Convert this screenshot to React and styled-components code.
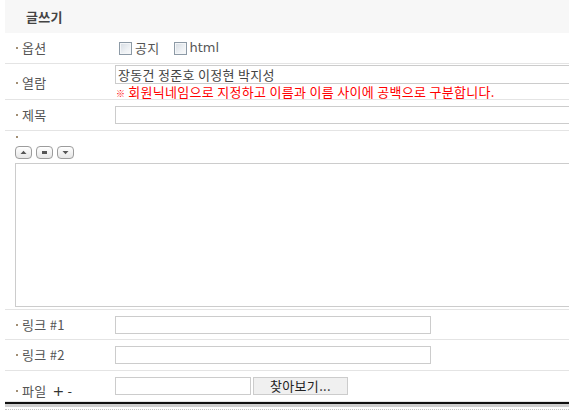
import React from 'react';
import styled, { createGlobalStyle } from 'styled-components';

const GlobalStyle = createGlobalStyle`
  html, body {
    margin: 0;
    padding: 0;
    background: #fff;
    overflow: hidden;
  }
  body {
    font-family: "Noto Sans CJK KR", "Noto Sans", sans-serif;
    font-size: 13px;
    letter-spacing: 0.3px;
    color: #555;
  }
`;

const Board = styled.div`
  width: 640px;
  margin-left: 5px;
`;

const Header = styled.div`
  height: 33px;
  background: #f7f7f7;
  display: flex;
  align-items: center;
  padding-left: 21px;
  font-weight: bold;
  color: #444;
  line-height: 1;
`;

const Row = styled.div`
  display: grid;
  grid-template-columns: 110px 1fr;
  align-items: center;
  height: ${(p) => p.$height || 30}px;
  border-bottom: 1px solid #e4e4e4;
`;

const Label = styled.div`
  display: flex;
  align-items: center;
  gap: 4px;
  padding-left: 11px;
  padding-top: ${(p) => p.$offset || 0}px;
  color: #555;
  line-height: 14px;
  white-space: nowrap;
`;

const Bullet = styled.span`
  width: 2px;
  height: 2px;
  background: #a38f74;
  flex: none;
`;

const Field = styled.div`
  display: flex;
  flex-direction: column;
  gap: 1px;
  padding: ${(p) => p.$pad || '0'};
`;

const Inline = styled.div`
  display: flex;
  align-items: center;
  gap: ${(p) => p.$gap ?? 3}px;
`;

const Check = styled.span`
  width: 11px;
  height: 11px;
  border: 1px solid #8d9aa6;
  background: linear-gradient(135deg, #d5dbe2 0%, #eef1f4 60%, #fafafa 100%);
  box-shadow: inset 0 0 0 1px #f4f6f8;
  margin-left: ${(p) => p.$ml || 0}px;
`;

const CheckText = styled.span`
  color: #555;
  font-size: 13px;
  letter-spacing: ${(p) => (p.$latin ? '0' : '0.3px')};
  font-family: ${(p) => (p.$latin ? '"DejaVu Sans", sans-serif' : 'inherit')};
  line-height: 14px;
`;

const TextInput = styled.input`
  box-sizing: border-box;
  height: ${(p) => p.$h || 18}px;
  width: ${(p) => (p.$w ? `${p.$w}px` : '100%')};
  border: 1px solid #ccc;
  padding: 0 2px;
  margin: 0;
  font-family: inherit;
  font-size: 13px;
  letter-spacing: 0.3px;
  line-height: 15px;
  color: #444;
  background: #fff;
  outline: none;
`;

const Notice = styled.div`
  color: #f00;
  line-height: 14px;
  padding-left: 1px;
  white-space: nowrap;
`;

const Mark = styled.span`
  font-size: 9px;
  margin-right: 3px;
`;

const EditorRow = styled.div`
  display: flex;
  flex-direction: column;
  padding: 5px 0 2px 10px;
  border-bottom: 1px solid #e4e4e4;
`;

const Dot = styled.span`
  width: 2px;
  height: 2px;
  background: #a38f74;
  margin: 0 0 8px 1px;
`;

const Tools = styled.div`
  display: flex;
  gap: 4px;
  margin-bottom: 4px;
`;

const ToolButton = styled.button`
  box-sizing: border-box;
  width: 17px;
  height: 13px;
  padding: 0;
  border: 1px solid #9c9c9c;
  border-radius: 4px;
  background: linear-gradient(#ffffff, #e6e6e6);
  display: flex;
  align-items: center;
  justify-content: center;
`;

const Editor = styled.textarea`
  box-sizing: border-box;
  display: block;
  height: 144px;
  width: 100%;
  border: 1px solid #ccc;
  resize: none;
  margin: 0;
  outline: none;
`;

const Plus = styled.span`
  color: #333;
  font-family: "DejaVu Sans", sans-serif;
  font-size: 14px;
  margin-left: 2px;
`;

const Minus = styled.span`
  color: #333;
  margin-left: -1px;
`;

const FindButton = styled.button`
  box-sizing: border-box;
  width: 95px;
  height: 18px;
  padding: 0;
  border: 1px solid #ccc;
  background: #f0f0f0;
  font-family: inherit;
  font-size: 13px;
  letter-spacing: 0.3px;
  line-height: 14px;
  color: #222;
`;

const FooterBar = styled.div`
  border-top: 2px solid #111;
  height: 3px;
  background: #cfcfcf;
`;

const FooterDots = styled.div`
  margin-top: 2px;
  border-top: 1px dotted #c4c4c4;
`;

const Arrow = ({ dir }) => (
  <svg width="7" height="5" viewBox="0 0 7 5">
    {dir === 'up' && <path d="M0.5 4 L3.5 0.8 L6.5 4 Z" fill="#555" />}
    {dir === 'mid' && <rect x="1" y="1" width="5" height="3" fill="#555" />}
    {dir === 'down' && <path d="M0.5 1 L3.5 4.2 L6.5 1 Z" fill="#555" />}
  </svg>
);

const Caption = ({ children, offset }) => (
  <Label $offset={offset}>
    <Bullet />
    {children}
  </Label>
);

const App = () => (
  <>
    <GlobalStyle />
    <Board>
      <Header>글쓰기</Header>

      <Row>
        <Caption>옵션</Caption>
        <Inline>
          <Check $ml={4} />
          <CheckText>공지</CheckText>
          <Check $ml={11} />
          <CheckText $latin>html</CheckText>
        </Inline>
      </Row>

      <Row $height={35}>
        <Caption>열람</Caption>
        <Field $pad="1px 0 0">
          <TextInput $h={19} defaultValue="장동건 정준호 이정현 박지성" />
          <Notice>
            <Mark>※</Mark>회원닉네임으로 지정하고 이름과 이름 사이에 공백으로 구분합니다.
          </Notice>
        </Field>
      </Row>

      <Row>
        <Caption>제목</Caption>
        <Field>
          <TextInput />
        </Field>
      </Row>

      <EditorRow>
        <Dot />
        <Tools>
          <ToolButton><Arrow dir="up" /></ToolButton>
          <ToolButton><Arrow dir="mid" /></ToolButton>
          <ToolButton><Arrow dir="down" /></ToolButton>
        </Tools>
        <Editor />
      </EditorRow>

      <Row $height={29}>
        <Caption>링크 #1</Caption>
        <Field>
          <TextInput $w={316} />
        </Field>
      </Row>

      <Row>
        <Caption>링크 #2</Caption>
        <Field>
          <TextInput $w={316} />
        </Field>
      </Row>

      <Row>
        <Caption offset={9}>
          파일<Plus>+</Plus><Minus>-</Minus>
        </Caption>
        <Inline $gap={2}>
          <TextInput $w={136} />
          <FindButton>찾아보기...</FindButton>
        </Inline>
      </Row>

      <FooterBar />
      <FooterDots />
    </Board>
  </>
);

export default App;
